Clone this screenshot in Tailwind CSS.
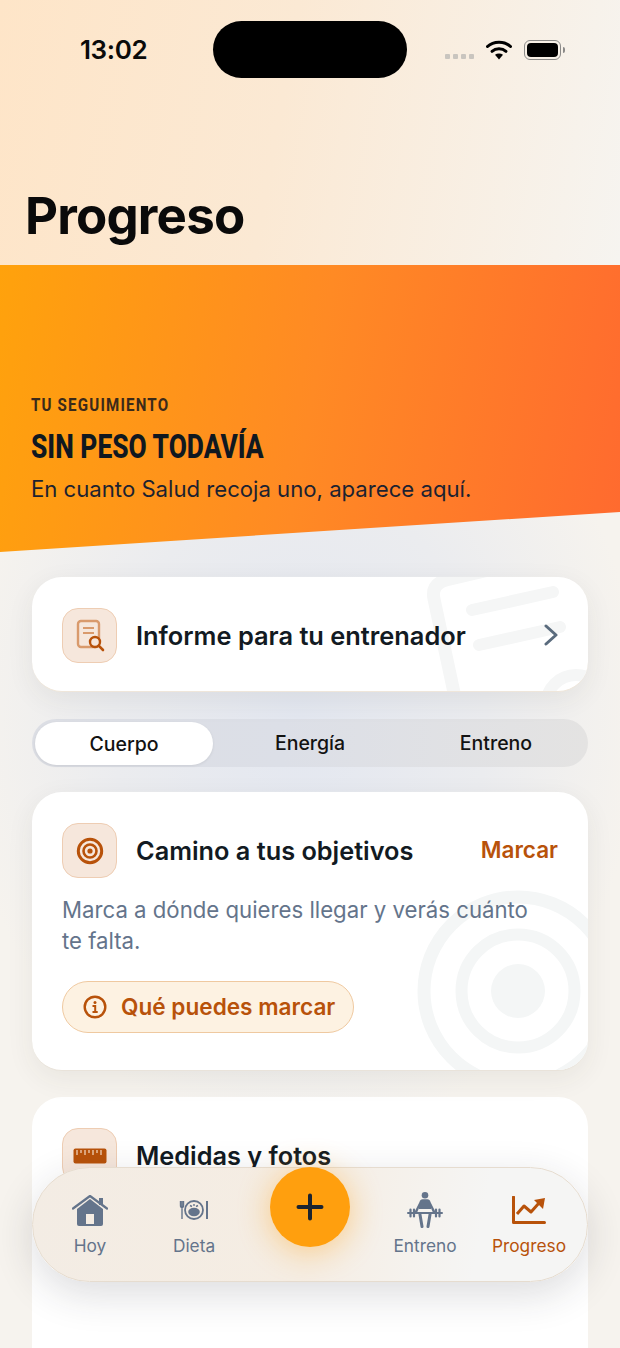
<!DOCTYPE html>
<html lang="es">
<head>
<meta charset="UTF-8">
<meta name="viewport" content="width=device-width, initial-scale=1.0">
<title>Progreso</title>
<script src="https://cdn.jsdelivr.net/npm/@tailwindcss/browser@4"></script>
</head>
<body class="m-0 font-['Inter',sans-serif]">
<div class="relative w-[620px] h-[1348px] overflow-hidden bg-[radial-gradient(ellipse_340px_420px_at_300px_720px,#e3e7f0_0%,#ebecef_55%,#f6f3ee_100%)]">

  <!-- header -->
  <header class="relative h-[265px] bg-[linear-gradient(100deg,#fee5c8_0%,#fbe9d4_45%,#f6f4f0_100%)]">
    <div class="absolute left-[213px] top-[21px] w-[194px] h-[57px] rounded-full bg-black"></div>
    <div class="flex items-center justify-between pt-[37px] pl-[80px] pr-[59px]">
      <span class="text-[26px] leading-[26px] font-semibold text-[#0a0a0a] tracking-[-0.4px]">13:02</span>
      <div class="flex items-center">
        <div class="flex gap-[3px] mr-[12px] mt-[12px]">
          <i class="block w-[5px] h-[5px] rounded-[1px] bg-[#c9c5bf]"></i>
          <i class="block w-[5px] h-[5px] rounded-[1px] bg-[#c9c5bf]"></i>
          <i class="block w-[5px] h-[5px] rounded-[1px] bg-[#c9c5bf]"></i>
          <i class="block w-[5px] h-[5px] rounded-[1px] bg-[#c9c5bf]"></i>
        </div>
        <svg class="w-[26px] h-[20px] mr-[12px]" viewBox="0 0 26 20" fill="none">
          <path d="M1.500 6.500C7.500 .7 18.500 .7 24.500 6.500" stroke="#000" stroke-width="3" stroke-linecap="round"/>
          <path d="M6 11.300c3.800-3.400 10.200-3.400 14 0" stroke="#000" stroke-width="3" stroke-linecap="round"/>
          <path d="M9 14.700c2.300-1.600 5.700-1.600 8 0L13 19.500z" fill="#000"/>
        </svg>
        <div class="relative w-[37px] h-[20px] rounded-[6px] border border-[#8b8a88] p-[2px]">
          <div class="w-full h-full rounded-[4px] bg-black"></div>
          <i class="absolute right-[-5px] top-[6px] block w-[2px] h-[6px] rounded-r-full bg-[#8b8a88]"></i>
        </div>
      </div>
    </div>
    <h1 class="absolute left-[25px] top-[185px] text-[51px] leading-[62px] font-bold text-[#0a0a0a] tracking-[-0.8px]">Progreso</h1>
  </header>

  <!-- hero -->
  <section class="h-[287px] pt-[130px] pl-[31px] bg-[linear-gradient(100deg,#ffa20c_0%,#ff8a24_50%,#ff6a2f_100%)] [clip-path:polygon(0_0,100%_0,100%_247px,0_100%)]">
    <p class="origin-left scale-x-[0.84] font-['Roboto',sans-serif] font-bold text-[18px] leading-[20px] tracking-[1.400px] text-[#3b2a1a] whitespace-nowrap">TU SEGUIMIENTO</p>
    <h2 class="mt-[12px] origin-left scale-x-[0.775] font-['Roboto',sans-serif] font-extrabold text-[34px] leading-[38px] text-[#101820] whitespace-nowrap">SIN PESO TODAVÍA</h2>
    <p class="mt-[9px] text-[22.150px] leading-[30px] text-[#1c2230]">En cuanto Salud recoja uno, aparece aquí.</p>
  </section>

  <main class="absolute left-[32px] top-[577px] w-[556px] flex flex-col">
    <!-- informe -->
    <div class="relative h-[115px] rounded-[30px] bg-white border-b border-[#efe6da] shadow-[0_8px_28px_rgba(60,50,40,0.07)] overflow-hidden flex items-center pl-[30px] pr-[30px] pt-[2px]">
      <svg class="absolute left-[390px] top-0 w-[166px] h-[115px]" viewBox="0 0 166 115" fill="none" stroke="#f5f6f6" stroke-linecap="round">
        <path d="M34 125 12 22C10 12 14 6 24 3L130-22" stroke-width="13"/>
        <path d="M50 33 131 15" stroke-width="12"/>
        <path d="M57 68 138 50" stroke-width="12"/>
        <circle cx="154" cy="128" r="30" stroke-width="12"/>
      </svg>
      <div class="relative shrink-0 w-[55px] h-[55px] rounded-[16px] bg-[#f6e7dc] border border-[#eecdb3] flex items-center justify-center">
        <svg class="w-[34px] h-[34px]" viewBox="0 0 34 34" fill="none">
          <rect x="5" y="3" width="21" height="26" rx="3" stroke="#d99a6c" stroke-width="2.400"/>
          <path d="M10 10h11M10 15h11" stroke="#d99a6c" stroke-width="2"/>
          <circle cx="22" cy="24" r="5" fill="#f6e7dc" stroke="#b8520a" stroke-width="2.400"/>
          <path d="M25.700 27.700 30 32" stroke="#b8520a" stroke-width="2.600" stroke-linecap="round"/>
        </svg>
      </div>
      <span class="relative ml-[19px] flex-1 pt-[3px] text-[25.400px] font-semibold text-[#121a22]">Informe para tu entrenador</span>
      <svg class="relative w-[14px] h-[22px]" viewBox="0 0 14 22" fill="none"><path d="M2 2l10 9-10 9" stroke="#5a6b7d" stroke-width="3" stroke-linecap="round" stroke-linejoin="round"/></svg>
    </div>

    <!-- segmented -->
    <div class="mt-[27px] h-[48px] rounded-full bg-[linear-gradient(90deg,#dcdee4_0%,#dcdfe7_45%,#e4e3e2_100%)] p-[3px] pt-[4px] grid grid-cols-[178px_178px_178px] gap-[8px] items-center text-[19.500px] font-medium text-[#121212] text-center">
      <div class="-mt-[1px] h-[43px] rounded-full bg-white pt-[1px] leading-[43px] shadow-[0_1px_3px_rgba(0,0,0,0.08)]">Cuerpo</div>
      <div>Energía</div>
      <div>Entreno</div>
    </div>

    <!-- objetivos -->
    <div class="relative mt-[25px] h-[279px] rounded-[30px] bg-white border-b border-[#e9e3da] shadow-[0_8px_28px_rgba(60,50,40,0.07)] overflow-hidden pt-[31px] px-[30px]">
      <svg class="absolute left-[380px] top-[94px] w-[176px] h-[185px]" viewBox="0 0 176 185" fill="none" stroke="#f4f6f6">
        <circle cx="106" cy="105" r="94" stroke-width="13"/>
        <circle cx="106" cy="105" r="56.500" stroke-width="12"/>
        <circle cx="106" cy="105" r="27" fill="#f4f6f6" stroke="none"/>
      </svg>
      <div class="relative flex items-center">
        <div class="shrink-0 w-[55px] h-[55px] rounded-[16px] bg-[#f6e7dc] border border-[#eecdb3] flex items-center justify-center">
          <svg class="w-[28px] h-[28px]" viewBox="0 0 28 28" fill="none" stroke="#b8520a">
            <circle cx="14" cy="14" r="11.700" stroke-width="3"/>
            <circle cx="14" cy="14" r="6.500" stroke-width="2.600"/>
            <circle cx="14" cy="14" r="2.600" fill="#b8520a" stroke="none"/>
          </svg>
        </div>
        <span class="ml-[19px] flex-1 text-[25.300px] font-semibold text-[#121a22]">Camino a tus objetivos</span>
        <span class="-mt-[1px] text-[22.500px] font-semibold text-[#b8520a]">Marcar</span>
      </div>
      <p class="relative mt-[16px] w-[480px] text-[22.200px] leading-[31px] text-[#64748b]">Marca a dónde quieres llegar y verás cuánto te falta.</p>
      <div class="relative mt-[25px] inline-flex items-center h-[52px] pl-[20px] pr-[18px] rounded-full bg-[#fdf2e2] border border-[#efc9a0]">
        <svg class="w-[24px] h-[24px]" viewBox="0 0 24 24" fill="none" stroke="#b8520a">
          <circle cx="12" cy="12" r="10.300" stroke-width="2.400"/>
          <circle cx="12" cy="7.500" r="1.500" fill="#b8520a" stroke="none"/>
          <path d="M9.500 11h2.700v6M9.500 17h5.200" stroke-width="2"/>
        </svg>
        <span class="ml-[14px] text-[22.600px] font-semibold text-[#b8520a]">Qué puedes marcar</span>
      </div>
    </div>

    <!-- medidas -->
    <div class="mt-[26px] h-[300px] rounded-[30px] bg-white pt-[31px] px-[30px]">
      <div class="flex items-center">
        <div class="shrink-0 w-[55px] h-[55px] rounded-[16px] bg-[#f6e7dc] border border-[#eecdb3] flex items-center justify-center">
          <svg class="w-[34px] h-[16px]" viewBox="0 0 34 16">
            <rect width="33" height="15" x=".5" y=".5" rx="2" fill="#b8520a"/>
            <path d="M4 2v5M8 2v3M12 2v5M16 2v3M20 2v5M24 2v3M28 2v5" stroke="#f6dcc6" stroke-width="1.200"/>
          </svg>
        </div>
        <span class="ml-[19px] flex-1 text-[25.300px] font-semibold text-[#121a22]">Medidas y fotos</span>
      </div>
    </div>
  </main>

  <!-- tab bar -->
  <nav class="absolute left-[32px] top-[1167px] w-[556px] h-[115px] rounded-[58px] border border-[#e6dccf] bg-[linear-gradient(100deg,#f3ece4_0%,#f5ede3_50%,#f5f5f4_80%)] shadow-[0_12px_40px_rgba(40,40,50,0.16)]">
    <div class="grid grid-cols-[104px_104px_127px_104px_104px] pl-[5px] pt-[24px] text-[17.300px] text-center text-[#64748b]">
      <div class="flex flex-col items-center">
        <div class="h-[36px] flex items-center">
          <svg class="w-[36px] h-[31px]" viewBox="0 0 36 31">
            <path d="M5 14 18 4l13 10v15a2 2 0 0 1-2 2H7a2 2 0 0 1-2-2z" fill="#64748b"/>
            <path d="M1 13.500 18 1l17 12.500" fill="none" stroke="#64748b" stroke-width="2.200" stroke-linecap="round" stroke-linejoin="round"/>
            <rect x="27" y="3" width="4" height="7" fill="#64748b"/>
            <rect x="14" y="19" width="8" height="10" fill="#f4ece3"/>
          </svg>
        </div>
        <span class="mt-[7px] leading-[22px]">Hoy</span>
      </div>
      <div class="flex flex-col items-center">
        <div class="h-[36px] flex items-center">
          <svg class="w-[30px] h-[20px]" viewBox="0 0 30 20" fill="none">
            <circle cx="15" cy="10" r="9" stroke="#64748b" stroke-width="1.800"/>
            <ellipse cx="15" cy="12" rx="5.800" ry="4.200" fill="#64748b"/>
            <path d="M11 5.500l2 1M19 5.500l-2 1M15 4v2" stroke="#64748b" stroke-width="1.400"/>
            <path d="M1.500 1v4.500c0 1.500 1 2 1.500 2s1.500-.5 1.500-2V1M3 1v18" stroke="#64748b" stroke-width="1.400"/>
            <path d="M28 1v18" stroke="#64748b" stroke-width="2"/>
          </svg>
        </div>
        <span class="mt-[7px] leading-[22px]">Dieta</span>
      </div>
      <div></div>
      <div class="flex flex-col items-center">
        <svg class="w-[36px] h-[36px]" viewBox="0 0 36 36" fill="none">
          <circle cx="18" cy="3.300" r="3.300" fill="#64748b"/>
          <path d="M12.500 10c.5-2 1.500-2.800 3-2.800h5c1.500 0 2.500.8 3 2.800l5 10-2.300 1.300L24 16v1H12v-1l-2.200 5.300L7.500 20z" fill="#64748b"/>
          <path d="M1 21h34" stroke="#64748b" stroke-width="2" stroke-linecap="round"/>
          <path d="M3.500 17.500v7M7 17.500v7M29 17.500v7M32.500 17.500v7" stroke="#64748b" stroke-width="2.200" stroke-linecap="round"/>
          <path d="M13 22.500l2 12M23 22.500l-2 12" stroke="#64748b" stroke-width="3" stroke-linecap="round"/>
        </svg>
        <span class="mt-[7px] leading-[22px]">Entreno</span>
      </div>
      <div class="flex flex-col items-center text-[#b8520a]">
        <div class="h-[36px] flex items-center">
          <svg class="w-[34px] h-[28px]" viewBox="0 0 34 28" fill="none">
            <path d="M1.500 1v25.500h31" stroke="#b8520a" stroke-width="3" stroke-linecap="round" stroke-linejoin="round"/>
            <path d="M5 18l7-8 7 6 8-9" stroke="#b8520a" stroke-width="3" stroke-linejoin="round"/>
            <path d="M22 4l11-2-2 11z" fill="#b8520a"/>
          </svg>
        </div>
        <span class="mt-[7px] leading-[22px]">Progreso</span>
      </div>
    </div>
    <div class="absolute left-[237px] top-[-1px] w-[80px] h-[80px] rounded-full bg-[#ff9f0e] shadow-[0_4px_32px_rgba(255,160,20,0.45)] flex items-center justify-center">
      <svg class="w-[28px] h-[28px]" viewBox="0 0 28 28"><path d="M14 2.500v23M2.500 14h23" stroke="#1b2430" stroke-width="4" stroke-linecap="round"/></svg>
    </div>
  </nav>
</div>
</body>
</html>
